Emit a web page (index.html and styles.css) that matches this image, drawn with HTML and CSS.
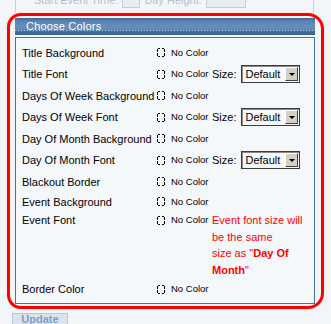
FILE: index.html
```html
<!DOCTYPE html>
<html lang="en">
<head>
    <meta charset="UTF-8">
    <title>Choose Colors</title>
    <link rel="stylesheet" href="styles.css">
</head>
<body>
    <div class="prev">
        <div class="prev-inner">Start Event Time: <span class="prev-box small"></span> Day Height: <span class="prev-box wide"></span></div>
    </div>

    <div class="callout">
        <div class="panel-head">Choose Colors</div>
        <div class="panel-body">
            <div class="row">
                <span class="label">Title Background</span>
                <span class="swatch"><svg class="nocolor" width="8" height="9" viewBox="0 0 8 9"><path d="M1 0h2v1H1zM5 0h2v1H5zM1 8h2v1H1zM5 8h2v1H5zM0 1h1v3H0zM0 5h1v3H0zM7 1h1v3H7zM7 5h1v3H7z"/></svg>No Color</span>
            </div>
            <div class="row row-sel">
                <span class="label">Title Font</span>
                <span class="swatch"><svg class="nocolor" width="8" height="9" viewBox="0 0 8 9"><path d="M1 0h2v1H1zM5 0h2v1H5zM1 8h2v1H1zM5 8h2v1H5zM0 1h1v3H0zM0 5h1v3H0zM7 1h1v3H7zM7 5h1v3H7z"/></svg>No Color</span>
                <span class="size">Size: <span class="select"><span class="select-text">Default</span><span class="select-btn"></span></span></span>
            </div>
            <div class="row">
                <span class="label">Days Of Week Background</span>
                <span class="swatch"><svg class="nocolor" width="8" height="9" viewBox="0 0 8 9"><path d="M1 0h2v1H1zM5 0h2v1H5zM1 8h2v1H1zM5 8h2v1H5zM0 1h1v3H0zM0 5h1v3H0zM7 1h1v3H7zM7 5h1v3H7z"/></svg>No Color</span>
            </div>
            <div class="row row-sel">
                <span class="label">Days Of Week Font</span>
                <span class="swatch"><svg class="nocolor" width="8" height="9" viewBox="0 0 8 9"><path d="M1 0h2v1H1zM5 0h2v1H5zM1 8h2v1H1zM5 8h2v1H5zM0 1h1v3H0zM0 5h1v3H0zM7 1h1v3H7zM7 5h1v3H7z"/></svg>No Color</span>
                <span class="size">Size: <span class="select"><span class="select-text">Default</span><span class="select-btn"></span></span></span>
            </div>
            <div class="row">
                <span class="label">Day Of Month Background</span>
                <span class="swatch"><svg class="nocolor" width="8" height="9" viewBox="0 0 8 9"><path d="M1 0h2v1H1zM5 0h2v1H5zM1 8h2v1H1zM5 8h2v1H5zM0 1h1v3H0zM0 5h1v3H0zM7 1h1v3H7zM7 5h1v3H7z"/></svg>No Color</span>
            </div>
            <div class="row row-sel">
                <span class="label">Day Of Month Font</span>
                <span class="swatch"><svg class="nocolor" width="8" height="9" viewBox="0 0 8 9"><path d="M1 0h2v1H1zM5 0h2v1H5zM1 8h2v1H1zM5 8h2v1H5zM0 1h1v3H0zM0 5h1v3H0zM7 1h1v3H7zM7 5h1v3H7z"/></svg>No Color</span>
                <span class="size">Size: <span class="select"><span class="select-text">Default</span><span class="select-btn"></span></span></span>
            </div>
            <div class="row">
                <span class="label">Blackout Border</span>
                <span class="swatch"><svg class="nocolor" width="8" height="9" viewBox="0 0 8 9"><path d="M1 0h2v1H1zM5 0h2v1H5zM1 8h2v1H1zM5 8h2v1H5zM0 1h1v3H0zM0 5h1v3H0zM7 1h1v3H7zM7 5h1v3H7z"/></svg>No Color</span>
            </div>
            <div class="row row-short">
                <span class="label">Event Background</span>
                <span class="swatch"><svg class="nocolor" width="8" height="9" viewBox="0 0 8 9"><path d="M1 0h2v1H1zM5 0h2v1H5zM1 8h2v1H1zM5 8h2v1H5zM0 1h1v3H0zM0 5h1v3H0zM7 1h1v3H7zM7 5h1v3H7z"/></svg>No Color</span>
            </div>
            <div class="row row-note">
                <span class="label">Event Font</span>
                <span class="swatch"><svg class="nocolor" width="8" height="9" viewBox="0 0 8 9"><path d="M1 0h2v1H1zM5 0h2v1H5zM1 8h2v1H1zM5 8h2v1H5zM0 1h1v3H0zM0 5h1v3H0zM7 1h1v3H7zM7 5h1v3H7z"/></svg>No Color</span>
                <span class="note">Event font size will<br>be the same<br>size as "<b>Day Of<br>Month</b>"</span>
            </div>
            <div class="row row-last">
                <span class="label">Border Color</span>
                <span class="swatch"><svg class="nocolor" width="8" height="9" viewBox="0 0 8 9"><path d="M1 0h2v1H1zM5 0h2v1H5zM1 8h2v1H1zM5 8h2v1H5zM0 1h1v3H0zM0 5h1v3H0zM7 1h1v3H7zM7 5h1v3H7z"/></svg>No Color</span>
            </div>
        </div>
    </div>

    <div class="actions">
        <button class="update">Update</button>
    </div>
</body>
</html>
```

FILE: styles.css
```css
body {
    margin: 0;
    background: #f3f6f9;
    font-family: "Liberation Sans", Arial, sans-serif;
    font-size: 11px;
    color: #000;
}
.prev {
    height: 13px;
    margin: 0 17px 0 15px;
    border-left: 1px solid #c8d0da;
    border-right: 1px solid #c8d0da;
    overflow: hidden;
}
.prev-inner {
    margin-top: -7px;
    padding-left: 18px;
    color: #b7bfc8;
    font-size: 11px;
    line-height: 15px;
    display: flex;
    align-items: center;
    gap: 4px;
}
.prev-box {
    display: inline-block;
    height: 13px;
    border: 1px solid #c6ced8;
    background: #e8edf2;
}
.prev-box.small { width: 16px; }
.prev-box.wide { width: 38px; }
.callout {
    margin: 0 7px;
    border: 3px solid #f00;
    border-radius: 14px 16px 16px 14px;
    padding: 2px 6px 2px 5px;
    box-shadow: 0 0 1px #ff8080;
}
.panel-head {
    height: 17px;
    line-height: 16px;
    padding-left: 11px;
    color: #fff;
    font-size: 11px;
    letter-spacing: 0.2px;
    background:
        repeating-linear-gradient(90deg, #b8cbe0 0 1px, transparent 1px 3px) left 12px / 100% 1px no-repeat,
        linear-gradient(#3c6795 0, #5982b0 3px, #6690bc 9px, #5a84b1 12px, #40699a 14px, #3a6492 17px);
    margin-bottom: 2px;
}
.panel-body {
    border: 1px solid #47719e;
    background: #f5f8fb;
    padding: 4px 0 4px 6px;
}
.row {
    display: grid;
    grid-template-columns: 135px 55px auto;
    align-items: center;
    height: 21px;
    line-height: 16px;
}
.row-sel { height: 22px; }
.row-short { height: 19px; }
.row-note {
    height: auto;
    align-items: start;
    padding: 1px 0;
}
.row-last { height: 20px; }
.swatch {
    display: flex;
    align-items: center;
    gap: 6px;
    font-size: 9.5px;
}
.nocolor {
    fill: #000;
    flex: none;
}
.size {
    display: flex;
    align-items: center;
    gap: 5px;
}
.select {
    display: flex;
    align-items: center;
    justify-content: space-between;
    width: 59px;
    height: 18px;
    box-sizing: border-box;
    border: 1px solid #3c3c3c;
    box-shadow: inset 1px 1px 0 #8a8a8a;
    background: #f7f9fb;
    padding: 0 1px 0 3px;
}
.select-text {
    font-size: 11px;
}
.select-btn {
    position: relative;
    width: 13px;
    height: 14px;
    box-sizing: border-box;
    background: #d4d0c8;
    border-top: 1px solid #fff;
    border-left: 1px solid #fff;
    border-right: 1px solid #404040;
    border-bottom: 1px solid #404040;
}
.select-btn::after {
    content: "";
    position: absolute;
    left: 3px;
    top: 5px;
    border-left: 3px solid transparent;
    border-right: 3px solid transparent;
    border-top: 3px solid #000;
}
.note {
    color: #f00;
    line-height: 16.5px;
}
.actions {
    margin: 4px 0 0 12px;
}
.update {
    display: block;
    width: 56px;
    height: 11px;
    padding: 0;
    border: 1px solid #bcc7d4;
    border-bottom: 0;
    background: #dbe3ec;
    color: #809fc6;
    font-family: "Liberation Sans", Arial, sans-serif;
    font-size: 11px;
    font-weight: bold;
    line-height: 10px;
}
```
